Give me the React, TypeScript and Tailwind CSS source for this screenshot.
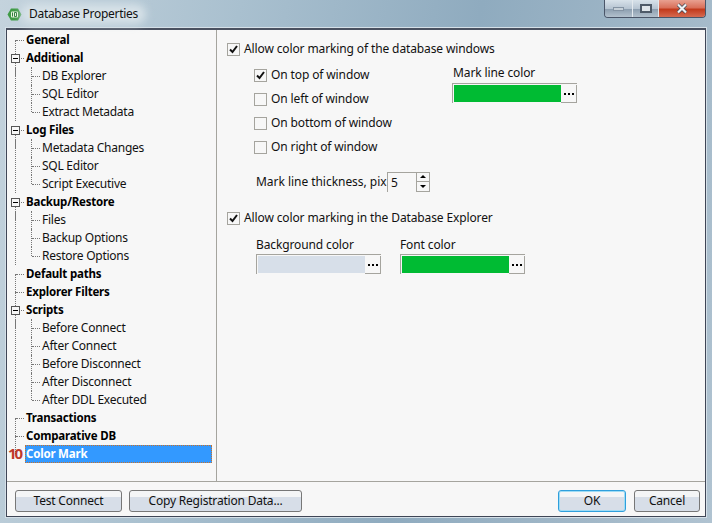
import React from "react";

type Node = { label: string; children?: string[]; selected?: boolean };

const tree: Node[] = [
  { label: "General" },
  { label: "Additional", children: ["DB Explorer", "SQL Editor", "Extract Metadata"] },
  { label: "Log Files", children: ["Metadata Changes", "SQL Editor", "Script Executive"] },
  { label: "Backup/Restore", children: ["Files", "Backup Options", "Restore Options"] },
  { label: "Default paths" },
  { label: "Explorer Filters" },
  { label: "Scripts", children: ["Before Connect", "After Connect", "Before Disconnect", "After Disconnect", "After DDL Executed"] },
  { label: "Transactions" },
  { label: "Comparative DB" },
  { label: "Color Mark", selected: true },
];

function Expander() {
  return (
    <span className="absolute left-[3px] top-[5px] flex h-[9px] w-[9px] items-center justify-center border border-[#555] bg-[#f7f7f7]">
      <span className="h-px w-[5px] bg-black" />
    </span>
  );
}

function TreeRow({ node, last }: { node: Node; last: boolean }) {
  return (
    <div>
      <div className="relative flex h-[18px] items-center">
        {!last && <span className="absolute left-[7px] top-[9px] h-[18px] border-l border-dotted border-[#777]" />}
        {!last && <span className="absolute left-[8px] top-[9px] w-[8px] border-t border-dotted border-[#777]" />}
        {node.children && <Expander />}
        {node.selected ? (
          <span className="ml-[17px] flex h-[18px] w-[187px] items-center border border-dotted border-[#c8722a] bg-[#3399ff] text-[11.5px] font-bold tracking-[-0.2px] text-white">
            {node.label}
          </span>
        ) : (
          <span className="ml-[18px] text-[11.5px] font-bold tracking-[-0.2px] text-black">{node.label}</span>
        )}
      </div>
      {node.children && (
        <div className="relative">
          <span className="absolute bottom-0 left-[7px] top-0 border-l border-dotted border-[#777]" />
          {node.children.map((c, i) => (
            <div key={c + i} className="relative flex h-[18px] items-center pl-[34px] tracking-[-0.25px] text-[#111]">
              <span className={`absolute left-[23px] top-0 border-l border-dotted border-[#777] ${i === node.children!.length - 1 ? "h-[9px]" : "h-[18px]"}`} />
              <span className="absolute left-[24px] top-[9px] w-[8px] border-t border-dotted border-[#777]" />
              {c}
            </div>
          ))}
        </div>
      )}
    </div>
  );
}

function Check({ checked, label, className = "" }: { checked?: boolean; label: string; className?: string }) {
  return (
    <div className={`flex h-[14px] items-center gap-[4px] ${className}`}>
      <span className="flex h-[13px] w-[13px] shrink-0 items-center justify-center border border-[#a5a49e] bg-[#f7f7f7]">
        {checked && (
          <svg width="11" height="11" viewBox="0 0 11 11">
            <path d="M2 5.5 L4.5 8 L9 2" fill="none" stroke="#111" strokeWidth="2" />
          </svg>
        )}
      </span>
      <span className="text-[#111]">{label}</span>
    </div>
  );
}

function ColorBox({ color }: { color: string }) {
  return (
    <div className="flex h-[20px] w-[125px] border-l border-t border-[#a5a49e] pl-[1px] pt-[1px]">
      <span className="h-[17px] w-[107px]" style={{ backgroundColor: color }} />
      <span className="flex h-[18px] w-[16px] items-center justify-center gap-[2px] border-b border-r border-[#a5a49e]">
        <span className="h-[2px] w-[2px] bg-black" />
        <span className="h-[2px] w-[2px] bg-black" />
        <span className="h-[2px] w-[2px] bg-black" />
      </span>
    </div>
  );
}

function Button({ label, width, primary }: { label: string; width: string; primary?: boolean }) {
  return (
    <button
      className={`flex h-[22px] items-center justify-center rounded-[3px] border bg-[linear-gradient(#f4f5f6_0_30%,#d7dee8_30%_100%)] tracking-[-0.2px] text-[#111] ${width} ${primary ? "border-[#2f9fdc] shadow-[inset_0_0_0_1px_#9fdcf5]" : "border-[#777]"}`}
    >
      {label}
    </button>
  );
}

export default function App() {
  return (
    <div
      className="flex h-[523px] w-[712px] flex-col overflow-hidden bg-[linear-gradient(100deg,#c4d3dd_0%,#a9c0cf_30%,#8fabbf_60%,#a2b8c8_85%,#b0c3d1_100%)] text-[12px] leading-none tracking-[-0.12px]"
      style={{ fontFamily: '"Noto Sans", sans-serif' }}
    >
      {/* title bar */}
      <div className="relative flex h-[28px] shrink-0 items-center pl-[7px]">
        <svg width="15" height="13" viewBox="0 0 15 13" className="shrink-0">
          <path d="M4 0.5 H11 L14.5 6.5 L11 12.5 H4 L0.5 6.5 Z" fill="#3f9b45" />
          <rect x="4" y="3.5" width="7" height="6" rx="1" fill="#e8f5e0" />
          <path d="M5.5 4.5 V8.5 M7.5 4.5 V8.5 H9.5 V4.5 Z" stroke="#2f7d3a" fill="none" />
        </svg>
        <span className="relative ml-[7px] text-[12px] tracking-[-0.3px] text-[#111]">
          <span className="absolute -inset-x-2 -inset-y-1 rounded-full bg-[#d7e2e8] blur-[4px]" />
          <span className="relative">Database Properties</span>
        </span>
        <div className="absolute right-[6px] top-0 flex h-[18px] overflow-hidden rounded-b-[4px] border border-t-0 border-[#4a5568]">
          <div className="flex w-[28px] items-center justify-center border-r border-[#e3e9ee] bg-[linear-gradient(#d8e2ea_0%,#b7c5d2_50%,#8d9fb0_55%,#b3c1cd_100%)]">
            <span className="mt-[1px] h-[4px] w-[11px] border border-[#8493a3] bg-[#c6d0d8]" />
          </div>
          <div className="flex w-[26px] items-center justify-center border-r border-[#e3e9ee] bg-[linear-gradient(#d8e2ea_0%,#b7c5d2_50%,#8d9fb0_55%,#b3c1cd_100%)]">
            <span className="flex h-[9px] w-[12px] items-center justify-center border-2 border-[#4e5a68] bg-[#dfe5ea]" />
          </div>
          <div className="flex w-[46px] items-center justify-center bg-[linear-gradient(#e8a090_0%,#d9705a_45%,#c23a1c_55%,#d66a50_100%)]">
            <svg width="12" height="11" viewBox="0 0 12 11">
              <path d="M2 1.5 L10 9.5 M10 1.5 L2 9.5" stroke="#3d4654" strokeWidth="3.6" />
              <path d="M2 1.5 L10 9.5 M10 1.5 L2 9.5" stroke="#f1f3f5" strokeWidth="2.2" />
            </svg>
          </div>
        </div>
      </div>

      {/* client area */}
      <div className="mx-[6px] mb-[6px] flex min-h-0 flex-1 flex-col border border-t-2 border-[#3f4656] border-t-[#4a5160] bg-[#f7f7f7] shadow-[0_0_0_1px_#d5e0e8]">
        <div className="flex min-h-0 flex-1 border-b border-[#a5a49e]">
          {/* tree */}
          <div className="relative h-full w-[210px] shrink-0 border-r border-[#a5a49e] pl-[1px] pt-[1px]">
            {tree.map((n, i) => (
              <TreeRow key={n.label} node={n} last={i === tree.length - 1} />
            ))}
            <span className="absolute left-[1px] top-[416px] text-[15px] font-bold tracking-[-2px] text-[#c0392b]">10</span>
          </div>

          {/* options */}
          <div className="min-w-0 flex-1 pl-[10px] pt-[12px]">
            <Check checked label="Allow color marking of the database windows" />
            <div className="mt-[12px] flex pl-[27px]">
              <div className="w-[198px]">
                <div className="flex flex-col gap-[10px]">
                  <Check checked label="On top of window" />
                  <Check label="On left of window" />
                  <Check label="On bottom of window" />
                  <Check label="On right of window" />
                </div>
                <div className="mt-[16px] flex h-[23px] items-center pl-[2px]">
                  <span className="w-[131px] shrink-0 tracking-[-0.04px] text-[#111]">Mark line thickness, pix</span>
                  <div className="flex h-[20px] w-[43px] border-l border-t border-[#a5a49e] pl-[3px]">
                    <span className="flex-1 pt-[4px] text-[#111]">5</span>
                    <div className="flex w-[14px] flex-col items-center border-l border-r border-[#a5a49e]">
                      <span className="flex h-[9px] w-full items-center justify-center border-b border-[#a5a49e]">
                        <span className="h-0 w-0 border-x-[3px] border-b-[3px] border-x-transparent border-b-black" />
                      </span>
                      <span className="flex h-[10px] w-full items-center justify-center border-b border-[#a5a49e]">
                        <span className="h-0 w-0 border-x-[3px] border-t-[3px] border-x-transparent border-t-black" />
                      </span>
                    </div>
                  </div>
                </div>
              </div>
              <div className="-mt-[1px]">
                <div className="mb-[4px] pl-px text-[#111]">Mark line color</div>
                <ColorBox color="#00bb33" />
              </div>
            </div>

            <Check checked label="Allow color marking in the Database Explorer" className="mt-[18px]" />
            <div className="mt-[14px] flex gap-[19px] pl-[29px]">
              <div>
                <div className="mb-[3px] text-[#111]">Background color</div>
                <ColorBox color="#d7dfe9" />
              </div>
              <div>
                <div className="mb-[3px] text-[#111]">Font color</div>
                <ColorBox color="#00bb33" />
              </div>
            </div>
          </div>
        </div>

        {/* footer */}
        <div className="flex h-[34px] shrink-0 items-start justify-between pl-[8px] pr-[5px] pt-[8px]">
          <div className="flex gap-[7px]">
            <Button label="Test Connect" width="w-[107px]" />
            <Button label="Copy Registration Data..." width="w-[173px]" />
          </div>
          <div className="flex gap-[8px]">
            <Button label="OK" width="w-[68px]" primary />
            <Button label="Cancel" width="w-[66px]" />
          </div>
        </div>
      </div>
    </div>
  );
}
